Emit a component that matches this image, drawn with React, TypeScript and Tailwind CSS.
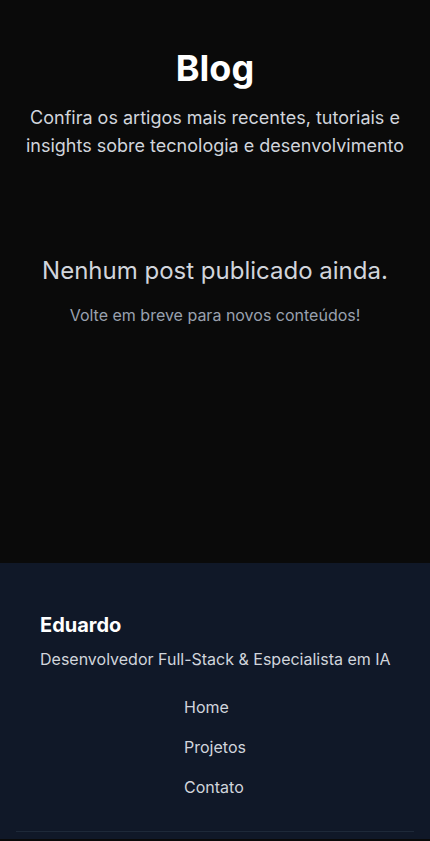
export default function App() {
  return (
    <div className="min-h-screen bg-[#0a0a0a] font-['Inter',sans-serif]">
      <main className="h-[563px] px-4 pt-12">
        <div className="text-center">
          <h1 className="text-4xl font-bold text-white mb-4">Blog</h1>
          <p className="text-lg leading-7 text-gray-300 max-w-[390px] mx-auto">
            Confira os artigos mais recentes, tutoriais e insights sobre tecnologia e desenvolvimento
          </p>
        </div>

        <div className="text-center mt-[95px]">
          <h2 className="text-2xl text-gray-300 mb-4">Nenhum post publicado ainda.</h2>
          <p className="text-base text-gray-400">Volte em breve para novos conteúdos!</p>
        </div>
      </main>

      <footer className="bg-gray-900">
        <div className="px-4 pt-12">
          <div className="pl-6">
            <h3 className="text-xl font-bold text-white">Eduardo</h3>
            <p className="mt-2 text-base text-gray-300 whitespace-nowrap">Desenvolvedor Full-Stack &amp; Especialista em IA</p>
          </div>
          <div className="flex justify-center mt-6">
            <ul className="space-y-4 text-gray-300">
              <li><a href="#">Home</a></li>
              <li><a href="#">Projetos</a></li>
              <li><a href="#">Contato</a></li>
            </ul>
          </div>
          <div className="mt-8 border-t border-gray-800 h-2"></div>
        </div>
      </footer>
    </div>
  )
}
